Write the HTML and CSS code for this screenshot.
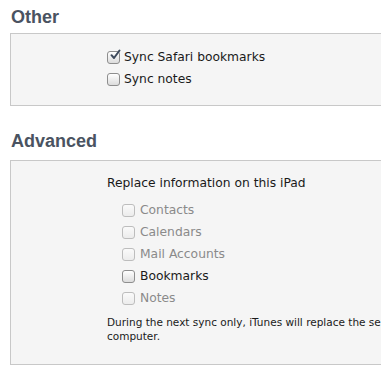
FILE: index.html
```html
<!DOCTYPE html>
<html lang="en">

<head>
  <meta charset="UTF-8" />
  <title>iPad Info</title>
  <link rel="stylesheet" href="styles.css">
</head>

<body>
  <h2 class="section-title">Other</h2>
  <div class="panel panel-other">
    <label class="row">
      <span class="check checked">
        <svg viewBox="0 0 12 12" width="12" height="12"><path d="M2.5 6.2 L5 9 L10.5 1.5" fill="none" stroke="#3d4a5c" stroke-width="2" stroke-linecap="round" stroke-linejoin="round"/></svg>
      </span>
      Sync Safari bookmarks
    </label>
    <label class="row">
      <span class="check"></span>
      Sync notes
    </label>
  </div>

  <h2 class="section-title second">Advanced</h2>
  <div class="panel panel-advanced">
    <div class="row heading">Replace information on this iPad</div>
    <div class="options">
      <label class="row disabled"><span class="check"></span>Contacts</label>
      <label class="row disabled"><span class="check"></span>Calendars</label>
      <label class="row disabled"><span class="check"></span>Mail Accounts</label>
      <label class="row"><span class="check"></span>Bookmarks</label>
      <label class="row disabled"><span class="check"></span>Notes</label>
    </div>
    <p class="note">During the next sync only, iTunes will replace the selected information on this iPad with information from this<br>computer.</p>
  </div>
</body>

</html>
```

FILE: styles.css
```css
html,
body {
  background: #fff;
  margin: 0;
  padding: 0;
  overflow: hidden;
}

body {
  font-family: "DejaVu Sans", sans-serif;
  font-size: 12.3px;
  color: #1a1a1a;
}

.section-title {
  font-family: "Liberation Sans", Arial, sans-serif;
  font-size: 18px;
  font-weight: bold;
  color: #4a5361;
  margin: 0;
  padding: 6px 0 0 11px;
  height: 27px;
  line-height: 22px;
}

.section-title.second {
  padding-top: 3px;
  height: 30px;
}

.panel {
  margin-left: 10px;
  width: 560px;
  border: 1px solid #c8c8c8;
  background: #f5f5f5;
}

.panel-other {
  padding: 12px 0 15px 96px;
  margin-bottom: 21px;
}

.panel-advanced {
  padding: 11px 0 21px 96px;
}

.row {
  display: flex;
  align-items: center;
  gap: 4px;
  height: 22px;
}

.heading {
  margin-bottom: 5px;
}

.options {
  padding-left: 15px;
}

.options .row {
  gap: 5px;
}

.check {
  width: 13px;
  height: 13px;
  box-sizing: border-box;
  border: 1px solid #8e8e8e;
  border-radius: 3px;
  background: linear-gradient(#ffffff, #dcdcdc);
  position: relative;
}

.check svg {
  position: absolute;
  left: 1px;
  top: -3px;
}

.disabled {
  color: #8a8a8a;
}

.disabled .check {
  border-color: #bdbdbd;
  background: linear-gradient(#fafafa, #ececec);
}

.note {
  margin: 6px 0 0;
  font-size: 10.5px;
  line-height: 14px;
  white-space: nowrap;
}
```
